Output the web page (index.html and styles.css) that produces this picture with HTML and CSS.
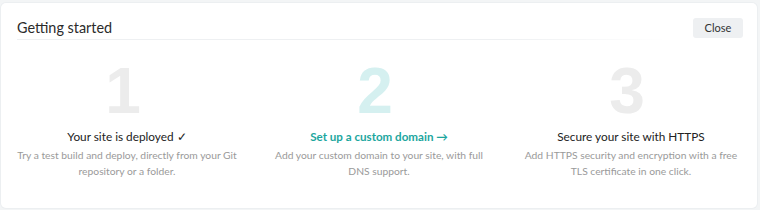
FILE: index.html
```html
<!DOCTYPE html>
<html>
<head>
<meta charset="utf-8">
<link rel="stylesheet" href="styles.css">
</head>
<body>
<div class="card">
  <div class="header">
    <h2 class="title">Getting started</h2>
    <button class="close">Close</button>
  </div>
  <div class="steps">
    <div class="step">
      <div class="num">1</div>
      <div class="step-title">Your site is deployed ✓</div>
      <p class="desc">Try a test build and deploy, directly from your Git repository or a folder.</p>
    </div>
    <div class="step active">
      <div class="num">2</div>
      <div class="step-title">Set up a custom domain →</div>
      <p class="desc">Add your custom domain to your site, with full DNS support.</p>
    </div>
    <div class="step">
      <div class="num">3</div>
      <div class="step-title">Secure your site with HTTPS</div>
      <p class="desc">Add HTTPS security and encryption with a free TLS certificate in one click.</p>
    </div>
  </div>
</div>
</body>
</html>
```
FILE: styles.css
```css
html, body {
  margin: 0;
  padding: 0;
  background: #f3f5f6;
}
body {
  padding: 3px 3px 2px 1px;
  font-family: "Lato", "Open Sans", sans-serif;
  color: #333;
}
.card {
  background: #fff;
  border-radius: 5px;
  height: 205px;
  box-sizing: border-box;
  box-shadow: 0 0 0 1px #eceff1;
}
.header {
  display: flex;
  align-items: center;
  justify-content: space-between;
  margin: 0 14px 0 16px;
  height: 37px;
  padding-top: 12px;
  box-sizing: border-box;
  position: relative;
}
.header::after {
  content: "";
  position: absolute;
  left: 0;
  bottom: 0;
  width: 650px;
  height: 1px;
  background: linear-gradient(to right, #eef0f2 75%, rgba(238,240,242,0));
}
.title {
  margin: 0;
  font-size: 14.4px;
  font-weight: 400;
  color: #2b2b2b;
}
.close {
  font-family: inherit;
  font-size: 11px;
  color: #333;
  background: #eef0f2;
  border: none;
  border-radius: 3px;
  width: 50px;
  height: 20px;
  padding: 0;
}
.steps {
  display: grid;
  grid-template-columns: repeat(3, 252px);
  padding-top: 15px;
}
.step {
  text-align: center;
}
.num {
  font-family: "Liberation Sans", Arial, sans-serif;
  font-size: 64px;
  font-weight: 700;
  line-height: 72px;
  height: 72px;
  color: #ececec;
  padding-right: 8px;
}
.active .num {
  color: #d5f0f0;
}
.step-title {
  margin-top: 2px;
  font-size: 11.8px;
  color: #222;
  line-height: 16px;
}
.active .step-title {
  color: #1ca69e;
  font-weight: 700;
  font-size: 11.6px;
}
.desc {
  margin: 2px auto 0;
  font-size: 10.3px;
  line-height: 16px;
  color: #9a9a9a;
  width: 222px;
}
```
